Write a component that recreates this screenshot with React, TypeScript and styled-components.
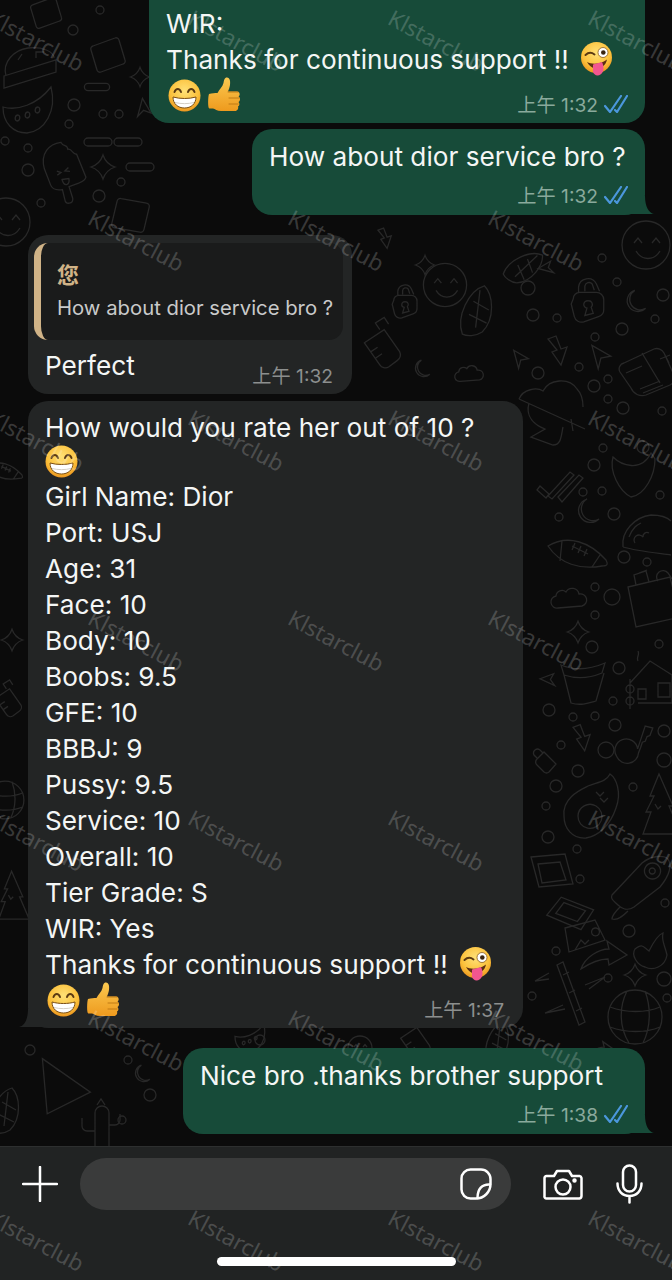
import styled, { createGlobalStyle } from "styled-components";

const FONT = `Inter, "Noto Sans CJK SC", sans-serif`;

const GlobalStyle = createGlobalStyle`
  html, body {
    margin: 0;
    padding: 0;
    background: #0b0b0b;
  }
`;

const Page = styled.div`
  position: relative;
  width: 672px;
  height: 1280px;
  overflow: hidden;
  display: flex;
  flex-direction: column;
  background: #0b0b0b;
  font-family: ${FONT};
  color: #f4f6f5;
`;

const Wallpaper = styled.svg`
  position: absolute;
  inset: 0;
  width: 672px;
  height: 1280px;
  fill: none;
  stroke: #282828;
  stroke-width: 1.3;
`;

const Thread = styled.main`
  position: relative;
  flex: 1;
  min-height: 0;
  display: flex;
  flex-direction: column;
  padding: 0 27px 0 28px;
`;

const Bubble = styled.div<{ $out?: boolean; $width: number; $gap: number; $top: number; $bottom: number; $clipped?: boolean }>`
  position: relative;
  box-sizing: border-box;
  width: ${(p) => p.$width}px;
  margin-top: ${(p) => p.$gap}px;
  align-self: ${(p) => (p.$out ? "flex-end" : "flex-start")};
  padding: ${(p) => p.$top}px 17px ${(p) => p.$bottom}px;
  border-radius: ${(p) => (p.$clipped ? "0 0 20px 20px" : "20px")};
  background: ${(p) => (p.$out ? "#174b39" : "#232525")};
`;

const Line = styled.div<{ $short?: boolean }>`
  height: ${(p) => (p.$short ? "33px" : "36px")};
  display: flex;
  align-items: center;
  font-size: 26.2px;
  white-space: nowrap;
`;

const EmojiSlot = styled.span`
  display: inline-flex;
  margin-left: 11px;
`;

const LastRow = styled.div`
  display: flex;
  align-items: center;
  justify-content: space-between;
  height: 36px;
`;

const EmojiGroup = styled.div`
  display: flex;
  align-items: center;
  gap: 6px;
  margin-left: 2px;
`;

const Meta = styled.div<{ $out?: boolean; $low?: boolean }>`
  display: flex;
  align-items: center;
  justify-content: flex-end;
  gap: 6px;
  height: ${(p) => (p.$low ? "24px" : "auto")};
  margin-top: ${(p) => (p.$low ? "9px" : "0")};
  margin-right: ${(p) => (p.$out ? "0" : "2px")};
  padding-top: ${(p) => (p.$low ? "0" : "18px")};
  font-size: 19.2px;
  white-space: nowrap;
  color: ${(p) => (p.$out ? "#8aa99c" : "#8c8f8e")};
`;

const Quote = styled.div`
  margin: -1px -8px 0 -11px;
  height: 97px;
  box-sizing: border-box;
  padding: 14px 0 0 16px;
  border-radius: 14px;
  border-left: 7px solid #d0b387;
  background: #1a1b1b;
`;

const QuoteAuthor = styled.div`
  font-size: 22px;
  font-weight: 700;
  color: #d0b387;
  font-family: "Noto Sans CJK SC", sans-serif;
  line-height: 32px;
`;

const QuoteText = styled.div`
  margin-top: 4px;
  font-size: 20.3px;
  line-height: 30px;
  color: #c9caca;
  white-space: nowrap;
`;

const ReplyRow = styled.div`
  display: flex;
  justify-content: space-between;
  align-items: center;
  height: 42px;
  margin-top: 4px;
  padding-right: 2px;
  font-size: 26.2px;
`;

const ReplyTime = styled.span`
  margin-top: 20px;
  font-size: 19.2px;
  color: #8c8f8e;
`;

const Tail = styled.svg<{ $out?: boolean }>`
  position: absolute;
  bottom: 1px;
  width: 30px;
  height: 24px;
  ${(p) => (p.$out ? "right: -9px;" : "left: -9px; transform: scaleX(-1);")}
`;

const Composer = styled.footer`
  position: relative;
  box-sizing: border-box;
  height: 134px;
  flex: none;
  display: flex;
  flex-direction: column;
  align-items: center;
  padding-top: 11px;
  background: #212323;
  border-top: 1px solid #2d2f2f;
`;

const ComposerRow = styled.div`
  width: 100%;
  display: flex;
  align-items: center;
  height: 52px;
  box-sizing: border-box;
  padding-left: 22px;
`;

const Input = styled.div`
  margin-left: 22px;
  width: 431px;
  height: 52px;
  box-sizing: border-box;
  border-radius: 26px;
  background: #3a3b3b;
  display: flex;
  align-items: center;
  justify-content: flex-end;
  padding-right: 19px;
`;

const Icon = styled.svg<{ $left?: number }>`
  display: block;
  flex: none;
  margin-left: ${(p) => p.$left ?? 0}px;
  fill: none;
  stroke: #ffffff;
  stroke-width: 2.5;
  stroke-linecap: round;
  stroke-linejoin: round;
`;

const HomeBar = styled.div`
  width: 239px;
  height: 9px;
  margin-top: 47px;
  border-radius: 5px;
  background: #ffffff;
`;

const Watermarks = styled.div`
  position: absolute;
  inset: 0;
  pointer-events: none;
`;

const Mark = styled.span`
  position: absolute;
  font-family: "Noto Sans", sans-serif;
  font-size: 22.5px;
  line-height: 26px;
  white-space: nowrap;
  color: rgba(255, 255, 255, 0.2);
  transform: rotate(28deg);
  transform-origin: left top;
`;

const EmojiSvg = styled.svg`
  display: block;
  flex: none;
`;

const Ticks = () => (
  <svg width="24" height="18" viewBox="0 0 24 18" fill="none" stroke="#4b97dc" strokeWidth="2.2" strokeLinecap="round">
    <path d="M1 11l5 6L17 1" />
    <path d="M11 15l2 2L23 1" />
  </svg>
);

const Wink = () => (
  <EmojiSvg width="33" height="34" viewBox="0 0 33 34">
    <circle cx="16.5" cy="15.5" r="15.5" fill="url(#faceGrad)" />
    <path d="M5.500 13c3-2.800 6-2.800 9 -.5" stroke="#5b3a12" strokeWidth="2" strokeLinecap="round" fill="none" />
    <circle cx="23" cy="10.500" r="5" fill="#fff" stroke="#8a5a1a" strokeWidth=".8" />
    <circle cx="23.300" cy="10.500" r="2.300" fill="#3a2510" />
    <path d="M7 20c5 2.500 13 2.500 20 -2.500c-1 6 -6 9 -11 9c-4 0 -7 -3 -9 -6.500z" fill="#5c2f13" />
    <path d="M13 22.500l9 -2.500c2 4 2.500 10 -1.500 12.500c-3 2 -7 .5 -7.500 -3z" fill="#f2568f" />
  </EmojiSvg>
);

const Grin = () => (
  <EmojiSvg width="33" height="33" viewBox="0 0 33 33">
    <circle cx="16.5" cy="16.5" r="16" fill="url(#faceGrad)" />
    <path d="M6.500 13c1.500-4 5-4 6.500 0M20 13c1.500-4 5-4 6.500 0" stroke="#5b3a12" strokeWidth="2" strokeLinecap="round" fill="none" />
    <path d="M5 18c7 2 16 2 23 0c0 7-5 11-11.500 11s-11.500-4-11.500-11z" fill="#fff" stroke="#7a4e15" strokeWidth="1" />
    <path d="M7 23.500c6 1.500 13 1.500 19 0" stroke="#cfc9bf" strokeWidth=".9" fill="none" />
  </EmojiSvg>
);

const Thumb = () => (
  <EmojiSvg width="35" height="37" viewBox="0 0 35 37">
    <path d="M2 17c3-1 6-1 8.500-1c2-4 5-6 6-10c.5-3 1-5.500 3.500-5.500c3 0 3.500 4 3 7.500c-.3 2.500-1.500 5-2 6.500h9c3 0 3.500 4 1.500 5c2 1 2 4.500 0 5.500c1.500 1.500 1 4-.5 4.500c.8 2-.5 4.500-3 4.500H14c-4 0-6-2-8-2.500H2.500C.5 32 1 19 2 17z" fill="url(#thumbGrad)" />
    <path d="M21 15h10M22 21h10M22 27h9" stroke="#c07a14" strokeWidth="1" strokeLinecap="round" />
  </EmojiSvg>
);

const OutTail = () => (
  <Tail $out viewBox="0 0 30 24">
    <path d="M0 24H30C25 23 21 17 21 6H0Z" fill="#174b39" />
  </Tail>
);

const InTail = () => (
  <Tail viewBox="0 0 30 24">
    <path d="M0 24H30C25 23 21 17 21 6H0Z" fill="#232525" />
  </Tail>
);

const SHAPES: Record<string, string> = {
  lock: "M-14 -6a6 6 0 0 1 6-6h16a7 7 0 0 1 7 7v9a7 7 0 0 1-5 7l-14 5a7 7 0 0 1-9-5l-3-12zM-9 -12v-5a9 9 0 0 1 17-3l3 7M-3 -13v-5a4 4 0 0 1 7-2l2 6M0 -4a3.500 3.500 0 0 1 3 6l2 6l-8 2l2-7a3.500 3.500 0 0 1 1-7z",
  moon: "M2-14a12 12 0 1 0 12 20a11 11 0 0 1-12-20z",
  bolt: "M-10-14l8-3l5 13l6-2l-6 18l-9-13l5-2z",
  nav: "M-9-14l21 12l-11 2l-3 12z",
  calc: "M-24-4l30-14a8 8 0 0 1 10 4l10 22a8 8 0 0 1-4 10l-24 10a12 12 0 0 1-15-7l-11-16a6 6 0 0 1 4-9zM-6-14l18 30M-22 6l16-7M-8 22l20-8M-5 26l20-8M12-8l10-4M16-14l5 10",
  cap: "M-38-18l66 30M-38-18c4-10 18-12 24-8c6-12 26-14 34-2c6 6 6 14 6 18M-28-14c-4 14 6 22 16 26l-14 8l22 8c8 0 8-8 10-18M14 2l2 12",
  shield: "M-20-10c8 8 28 16 38-4l4 6c0 16-10 36-24 38c-12-6-22-26-18-40zM4-20a6 6 0 1 1 12 0a6 6 0 1 1-12 0z",
  checks: "M-20 3l9 8l-3 4l-9-8zM-12 13l22-24l4 3l-22 24zM-2 14l21-22l4 3l-21 24z",
  ball: "M-30-6c20-12 42-4 58 14c2 4 2 6-4 6c-22 4-42-2-54-20zM-16-11l-2 20M22 3l-8 12M-6-6l16 8M-3-9l-3 7M3-6l-3 7M9-3l-3 7",
  taco: "M-24 14c-2-16 12-30 28-32c8 0 16 2 20 6M-24 14c14 4 34 6 48 8M-18 4c4-10 8-12 12-14M-12 10a4 4 0 0 1 8-6a4 4 0 0 1 6-4",
  cloud: "M-12 8a6 6 0 0 1-2-12a6 6 0 0 1 10-4a7 7 0 0 1 13 2a6 6 0 0 1 3 12z",
  jar: "M-22-6l42-10l10 40l-44 10zM-14-8l-2-10l12-4l3 11M-11-20l8-3M8-12a6 6 0 0 1 10-8l4 6",
  pot: "M-22-18c14 6 30 4 44-2l-3 10c-12 5-26 6-38 2zM-19-8l7 28c10 3 18 0 25-2l8-28",
  cabin: "M-22 0l20-22l22 14v24M-22 -4v30M-14 20h34v-20M-14 6h8v10h-8zM6 0h12v14h-12zM-26 6a4 4 0 1 0 8 0a4 4 0 1 0-8 0zM-26 18a4 4 0 1 0 8 0a4 4 0 1 0-8 0zM-14-22c-2-4 2-6 0-10",
  key: "M-14 10a12 12 0 1 1 22-8l8-24l8 2l-3 8l-3 1l-2 5l-3 1l-2 6l-2 5a12 12 0 0 1-23 4z",
  padlock: "M-8-4l7-7l12 12l-7 8a4 4 0 0 1-5 0l-7-7a4 4 0 0 1 0-6zM-8-5l-3-3a4 4 0 0 1 6-5l3 3",
  avocado: "M-28 8c-2-18 16-26 24-30c10-4 18-4 22-12c6 4 12 18 6 34c-6 18-18 28-30 30c-14 1-22-10-22-22zM-14 8a12 12 0 1 0 18-10a12 12 0 0 0-18 10zM4-16l4 4l4-4M8-10l4 4l4-4",
  pine: "M2-36l14 32l-4 0l12 28h-38l8-22h-5l8-16h-4zM-2-6l3 5l3-3",
  frame: "M-21-20l34-3l8 30l-34 3zM-14-13l22-2l6 18l-24 3z",
  frame2: "M-28 8l16-20l36 14l-14 22zM-18 6l9-12l24 9l-9 12z",
  rocket: "M-26 12l30-32c10-8 22-8 26-4c4 6 2 16-8 28l-26 20c-6 4-12 2-16-2c-4-4-8-6-6-10zM14-4a8 8 0 1 1 1 0zM14 -9a3 3 0 1 1 .5 0zM-18 24c-4 4-8 8-8 12c6 2 12-4 16-8",
  arrow: "M-22 16c4-12 18-20 28-20l-2-8l20 14l-18 10l-1-6c-8 0-18 4-27 10z",
  sparkle: "M0-12c2 6 6 10 12 12c-6 2-10 6-12 12c-2-6-6-10-12-12c6-2 10-6 12-12z",
  globe: "M-27 0a27 27 0 1 0 54 0a27 27 0 1 0-54 0zM-25-10c16 6 36 6 50 0M-25 10c16 6 36 6 50 0M-8-26c-8 16-8 36 2 52M10-26c6 16 6 36-2 52",
  bamboo: "M-10-32l6-3l22 60l-6 3zM-4-22l6-3M2-4l6-3M9 14l6-3M-18-24l-14 8l14-2M18-12l20-8l-16 12M-4 8l-18 8l20-4",
  mitten: "M-18 2c8-6 8-2 14 2c2-4 8-16 14-18c-2 8 2 12 4 22c-2 12-14 16-22 12c-8-2-14-12-10-18z",
  photo: "M-18-12l30-8l10 20l-36 12zM-8 10l6-10l4 4l4-4M12-12a4 4 0 1 0 1 0z",
  melon: "M-25-6c14 4 34-2 48-20c6 24-6 44-24 46c-14 0-24-10-24-26zM-10 2c3 1 2 6-1 6c-3-1-2-6 1-6zM0-1c3 1 2 6-1 6c-3-1-2-6 1-6zM10-6c3 1 2 6-1 6c-3-1-2-6 1-6z",
  pop: "M-20-6c-2-16 8-24 20-24c2 6 6 2 6 8c4-1 4 6 8 6l6 24c-1 3-4 4-8 5l-10 2l2 12c0 6-8 6-8 0l-1-10c-6 0-10-1-11-6zM-8-2l4 2l-4 2M4-4l-4 3l5 1M-4 7h7c0 7-6 8-7 0z",
  pill: "M-10-4h20a4 4 0 0 1 0 8h-20a4 4 0 0 1 0-8z",
  cake: "M-26 10l52-16v12l-52 16zM-24 10c-4-14 8-26 22-28c14-2 26 4 26 10M-12-6l4-6M6-8v-6h8",
  box: "M-16-8l22-8a3 3 0 0 1 4 2l6 20a3 3 0 0 1-2 4l-22 8a3 3 0 0 1-4-2l-6-20a3 3 0 0 1 2-4z",
  smile: "M-24 0a24 24 0 1 0 48 0a24 24 0 1 0-48 0zM-12-2l4-5l4 5M6-2l4-5l4 5M-10 6c6 10 18 10 24 0",
  play: "M-18-22l40 28l-36 18z",
  cactus: "M-8 26v-38a7 7 0 0 1 14 0v38M-8 6h-8a5 5 0 0 1-5-5v-8M6 0h6a5 5 0 0 0 5-5v-6M-6-20l4-6l4 6",
  corn: "M-16 22c-6-16 6-40 20-44c8 8 10 30-2 42c-6 4-14 4-18 2zM-6-8l14 8M-10 4l16 8M0-18l-4 34",
  bottle: "M-16-2l18-12l14 20a6 6 0 0 1-2 8l-8 6a6 6 0 0 1-8-2zM-2-14l-4-6l8-5l4 6M-10 6l6-4M-6 12l6-4",
};

const DOODLES: [string, number, number, number, number][] = [
  ["box", 47, 12, 0.9, 0],
  ["cake", 30, 66, 1, 0],
  ["box", 109, 54, 1, 0],
  ["melon", 28, 113, 1, 0],
  ["pop", 65, 172, 1, -8],
  ["pill", 97, 87, 0.9, 0],
  ["pill", 98, 142, 1, 0],
  ["pill", 128, 142, 1, 0],
  ["pill", 140, 167, 1, 0],
  ["sparkle", 103, 167, 1, 0],
  ["sparkle", 140, 77, 0.8, 0],
  ["nav", 143, 110, 0.7, 30],
  ["smile", 6, 222, 1, 0],
  ["box", 132, 215, 1.1, 30],
  ["lock", 588, 305, 1.05, 0],
  ["moon", 633, 303, 0.9, 0],
  ["bolt", 558, 353, 1, 0],
  ["nav", 600, 358, 0.9, 0],
  ["nav", 548, 268, 0.6, -60],
  ["calc", 648, 367, 1, 0],
  ["cap", 557, 417, 1, 0],
  ["shield", 633, 467, 1, 0],
  ["checks", 560, 483, 1, 0],
  ["moon", 585, 513, 1, 0],
  ["ball", 578, 552, 1, 0],
  ["taco", 647, 533, 1, 0],
  ["cloud", 570, 600, 1, 0],
  ["jar", 650, 593, 1, 0],
  ["smile", 646, 245, 1, 0],
  ["pot", 583, 683, 1, 0],
  ["cabin", 652, 683, 1, 0],
  ["key", 630, 747, 0.95, 0],
  ["bolt", 582, 740, 0.9, 0],
  ["padlock", 545, 763, 1, 0],
  ["avocado", 592, 808, 1, 0],
  ["pine", 657, 810, 1, 0],
  ["frame", 552, 877, 1, 0],
  ["frame2", 572, 908, 0.9, 0],
  ["rocket", 638, 883, 1, 0],
  ["photo", 583, 940, 1, 0],
  ["arrow", 603, 953, 1, 0],
  ["sparkle", 635, 975, 0.9, 0],
  ["sparkle", 578, 632, 0.9, 0],
  ["globe", 635, 1017, 1, 0],
  ["bamboo", 567, 997, 1, 0],
  ["mitten", 653, 947, 1, 0],
  ["nav", 550, 680, 0.6, -50],
  ["play", 64, 1085, 1.2, 0],
  ["cactus", 103, 1125, 1, 0],
  ["corn", 8, 1110, 1, 0],
  ["bottle", 415, 1040, 0.9, 0],
  ["corn", 500, 1040, 0.8, 0],
  ["smile", 360, 1048, 0.5, 0],
  ["melon", 250, 1040, 0.6, 0],
  ["corn", 527, 268, 0.9, 40],
  ["bottle", 382, 345, 1.1, 0],
  ["sparkle", 425, 265, 0.8, 0],
  ["smile", 445, 285, 0.9, 0],
  ["corn", 480, 310, 1.1, 0],
  ["lock", 405, 305, 0.8, 0],
  ["moon", 420, 370, 0.7, 0],
  ["bolt", 385, 240, 0.7, 0],
  ["cloud", 470, 375, 0.8, 0],
  ["nav", 520, 360, 0.7, 0],
  ["moon", 140, 1075, 0.7, 0],
  ["frame", 620, 1090, 0.8, 20],
  ["arrow", 600, 1050, 0.7, 0],
  ["sparkle", 12, 640, 0.9, 0],
  ["bottle", 8, 700, 0.8, 0],
  ["pine", 10, 900, 0.8, 0],
  ["ball", 5, 470, 0.6, 0],
  ["globe", 5, 800, 0.7, 0],
];

const DOTS: [number, number, number][] = [
  [73, 30, 5], [100, 10, 4], [74, 105, 6], [69, 124, 4], [103, 114, 4], [119, 114, 4],
  [5, 141, 4], [28, 148, 4], [28, 170, 6], [41, 203, 4], [99, 196, 6], [121, 182, 4],
  [602, 258, 4], [617, 282, 4], [663, 295, 6], [528, 288, 7], [533, 315, 6], [557, 318, 4],
  [655, 319, 4], [622, 329, 6], [595, 337, 4], [538, 373, 6], [579, 367, 4], [594, 386, 6],
  [608, 379, 4], [608, 399, 4], [623, 408, 6], [662, 411, 4], [603, 448, 4], [594, 465, 6],
  [583, 492, 4], [602, 491, 4], [660, 495, 4], [559, 517, 4], [614, 514, 6], [624, 557, 6],
  [647, 562, 4], [595, 587, 4], [612, 597, 8], [595, 615, 4], [592, 647, 6], [619, 668, 6],
  [659, 644, 4], [549, 710, 6], [613, 701, 4], [573, 717, 4], [595, 716, 4], [615, 725, 6],
  [561, 745, 4], [606, 750, 8], [664, 731, 6], [664, 760, 7], [578, 771, 6], [556, 786, 6],
  [546, 806, 4], [633, 787, 4], [548, 837, 6], [577, 849, 4], [580, 879, 4], [665, 903, 4],
  [629, 931, 6], [556, 951, 4], [608, 978, 4], [664, 979, 7], [667, 998, 4], [532, 996, 4],
  [30, 1050, 5], [128, 1060, 4], [150, 1095, 6], [122, 1120, 4], [260, 1040, 5], [600, 1090, 4],
];

const WATERMARKS: [number, number][] = [
  [196, 5], [396, 5], [596, 5], [-4, 5],
  [96, 205], [296, 205], [496, 205],
  [-4, 405], [196, 405], [396, 405], [596, 405],
  [96, 605], [296, 605], [496, 605],
  [-4, 805], [196, 805], [396, 805], [596, 805],
  [96, 1005], [296, 1005], [496, 1005],
  [-4, 1205], [196, 1205], [396, 1205], [596, 1205],
];

const LINES = [
  "Girl Name: Dior",
  "Port: USJ",
  "Age: 31",
  "Face: 10",
  "Body: 10",
  "Boobs: 9.5",
  "GFE: 10",
  "BBBJ: 9",
  "Pussy: 9.5",
  "Service: 10",
  "Overall: 10",
  "Tier Grade: S",
  "WIR: Yes",
];

export default function App() {
  return (
    <Page>
      <GlobalStyle />
      <Wallpaper viewBox="0 0 672 1280">
        <defs>
          <radialGradient id="faceGrad" cx="50%" cy="35%" r="70%">
            <stop offset="0%" stopColor="#ffe177" />
            <stop offset="65%" stopColor="#fbc03a" />
            <stop offset="100%" stopColor="#e78a17" />
          </radialGradient>
          <linearGradient id="thumbGrad" x1="0" y1="0" x2="0" y2="1">
            <stop offset="0%" stopColor="#fbc950" />
            <stop offset="100%" stopColor="#ee9a1e" />
          </linearGradient>
        </defs>
        {DOODLES.map(([name, x, y, s, r], i) => (
          <path
            key={i}
            d={SHAPES[name]}
            transform={`translate(${x} ${y}) rotate(${r}) scale(${s})`}
            vectorEffect="non-scaling-stroke"
          />
        ))}
        {DOTS.map(([cx, cy, r], i) => (
          <circle key={i} cx={cx} cy={cy} r={r} />
        ))}
      </Wallpaper>

      <Thread>
        <Bubble $out $clipped $width={496} $gap={0} $top={5} $bottom={10}>
          <Line>WIR:</Line>
          <Line>
            Thanks for continuous support !!
            <EmojiSlot>
              <Wink />
            </EmojiSlot>
          </Line>
          <LastRow>
            <EmojiGroup>
              <Grin />
              <Thumb />
            </EmojiGroup>
            <Meta $out>
              上午 1:32
              <Ticks />
            </Meta>
          </LastRow>
        </Bubble>

        <Bubble $out $width={393} $gap={6} $top={9} $bottom={8}>
          <Line>How about dior service bro ?</Line>
          <Meta $out $low>
            上午 1:32
            <Ticks />
          </Meta>
          <OutTail />
        </Bubble>

        <Bubble $width={324} $gap={20} $top={9} $bottom={8}>
          <Quote>
            <QuoteAuthor>您</QuoteAuthor>
            <QuoteText>How about dior service bro ?</QuoteText>
          </Quote>
          <ReplyRow>
            Perfect
            <ReplyTime>上午 1:32</ReplyTime>
          </ReplyRow>
        </Bubble>

        <Bubble $width={495} $gap={7} $top={8} $bottom={10}>
          <Line>How would you rate her out of 10 ?</Line>
          <Line $short>
            <Grin />
          </Line>
          {LINES.map((line) => (
            <Line key={line}>{line}</Line>
          ))}
          <Line>
            Thanks for continuous support !!
            <EmojiSlot>
              <Wink />
            </EmojiSlot>
          </Line>
          <LastRow>
            <EmojiGroup>
              <Grin />
              <Thumb />
            </EmojiGroup>
            <Meta>上午 1:37</Meta>
          </LastRow>
          <InTail />
        </Bubble>

        <Bubble $out $width={462} $gap={20} $top={9} $bottom={8}>
          <Line>Nice bro .thanks brother support</Line>
          <Meta $out $low>
            上午 1:38
            <Ticks />
          </Meta>
          <OutTail />
        </Bubble>
      </Thread>

      <Composer>
        <ComposerRow>
          <Icon width="36" height="36" viewBox="0 0 36 36">
            <path d="M18 1v34M1 18h34" />
          </Icon>
          <Input>
            <Icon width="32" height="32" viewBox="0 0 32 32">
              <path d="M10.500 1.500H21A9.500 9.500 0 0 1 30.500 11V16C30.500 24 24 30.500 16 30.500H10.500A9 9 0 0 1 1.500 21.500V10.500A9 9 0 0 1 10.500 1.500Z" />
              <path d="M30 16.500C22 16 17.500 21 17.500 30" />
            </Icon>
          </Input>
          <Icon $left={32} width="40" height="31" viewBox="0 0 40 31">
            <path d="M3.500 7H11L14 2H26L29 7H36.500A2.500 2.500 0 0 1 38.500 9V27A2.500 2.500 0 0 1 36.500 29.500H3.500A2 2 0 0 1 1.500 27V9A2 2 0 0 1 3.500 7Z" />
            <circle cx="20" cy="18" r="7.500" />
            <circle cx="31.500" cy="11.500" r="1" fill="#fff" />
          </Icon>
          <Icon $left={33} width="27" height="40" viewBox="0 0 27 40">
            <rect x="7" y="1.500" width="13" height="26" rx="6.500" />
            <path d="M1.500 19.500C1.500 27 6.500 32 13.500 32S25.500 27 25.500 19.500M13.500 32V38.500" />
          </Icon>
        </ComposerRow>
        <HomeBar />
      </Composer>

      <Watermarks>
        {WATERMARKS.map(([x, y]) => (
          <Mark key={`${x}-${y}`} style={{ left: x, top: y }}>
            Klstarclub
          </Mark>
        ))}
      </Watermarks>
    </Page>
  );
}
